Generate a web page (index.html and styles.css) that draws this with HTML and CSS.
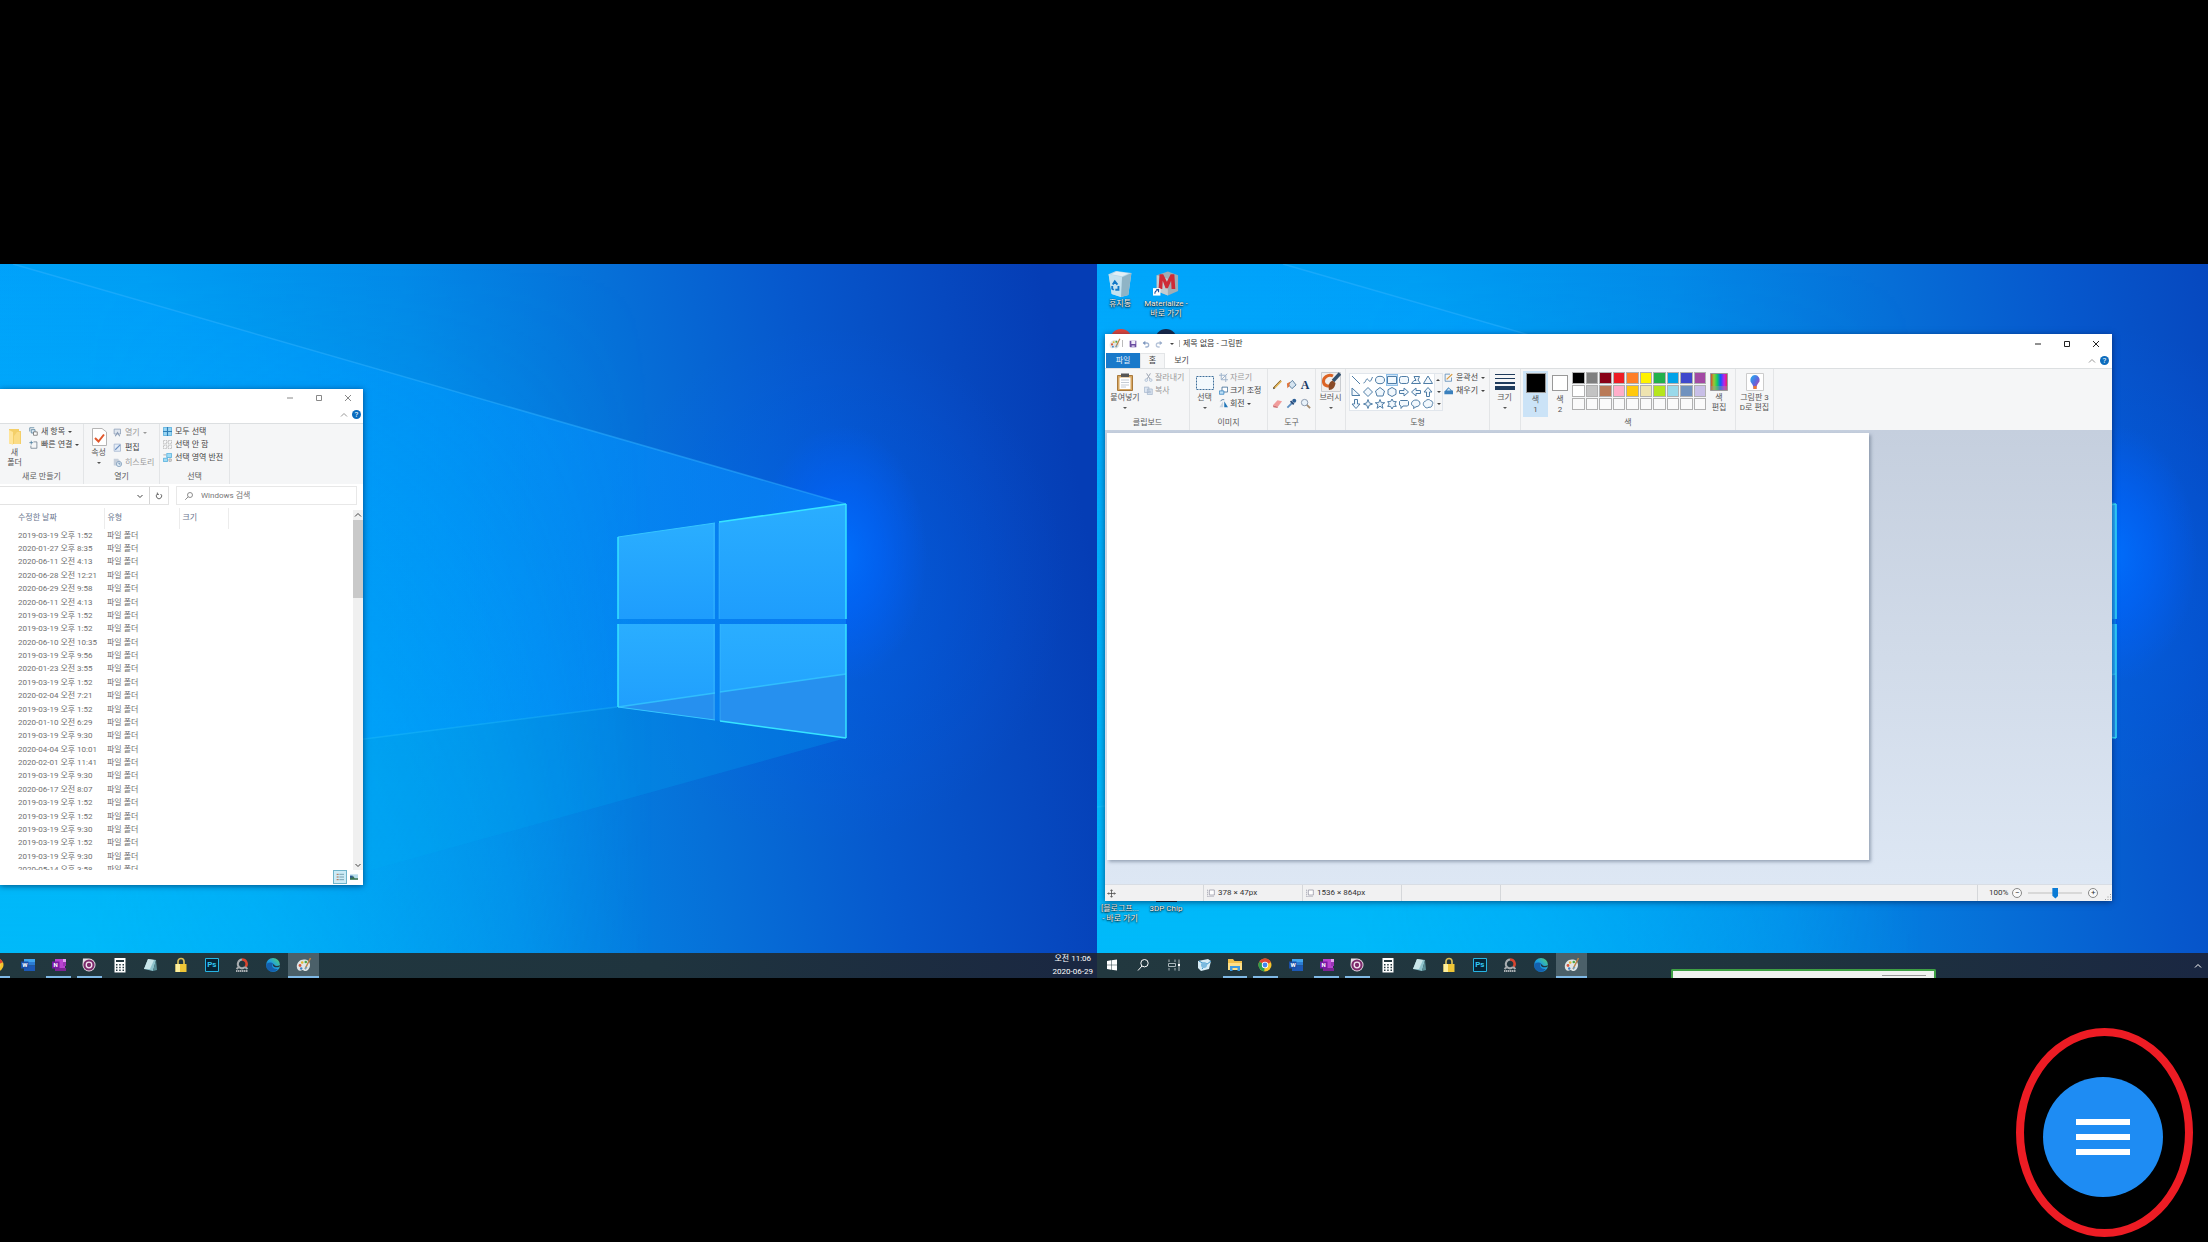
FILE: index.html
```html
<!DOCTYPE html>
<html lang="ko">
<head>
  <meta charset="UTF-8">
  <meta name="viewport" content="width=device-width, initial-scale=1.0">
  <title>원격 데스크톱</title>
  <link rel="stylesheet" href="styles.css">
</head>
<body>
  <!-- Icon sprite -->
  <svg class="sprite" aria-hidden="true">
    <defs>
      <linearGradient id="sky" x1="0" y1="0.55" x2="1" y2="0.45">
        <stop offset="0" stop-color="#00a8fb"/>
        <stop offset="0.3" stop-color="#009ef4"/>
        <stop offset="0.5" stop-color="#038ae8"/>
        <stop offset="0.66" stop-color="#0670d8"/>
        <stop offset="0.8" stop-color="#0658cd"/>
        <stop offset="0.92" stop-color="#0648bf"/>
        <stop offset="1" stop-color="#053db5"/>
      </linearGradient>
      <linearGradient id="floor" x1="0" y1="0" x2="0" y2="1">
        <stop offset="0" stop-color="#00c0fa" stop-opacity="0"/>
        <stop offset="1" stop-color="#00c0fa" stop-opacity="0.8"/>
      </linearGradient>
      <linearGradient id="floorFade" x1="0" y1="0" x2="1" y2="0">
        <stop offset="0.2" stop-color="#fff"/>
        <stop offset="0.65" stop-color="#000"/>
      </linearGradient>
      <mask id="floorMask"><rect width="1270" height="714" fill="url(#floorFade)"/></mask>
      <linearGradient id="beam" x1="0" y1="0" x2="1" y2="0">
        <stop offset="0" stop-color="#00a8ff" stop-opacity="0.4"/>
        <stop offset="0.6" stop-color="#0096ff" stop-opacity="0.6"/>
        <stop offset="1" stop-color="#0a86f8" stop-opacity="0.7"/>
      </linearGradient>
      <radialGradient id="glow">
        <stop offset="0" stop-color="#0070ff"/>
        <stop offset="0.45" stop-color="#0066ff" stop-opacity="0.65"/>
        <stop offset="1" stop-color="#0060ff" stop-opacity="0"/>
      </radialGradient>
      <linearGradient id="pane" x1="0" y1="0" x2="0" y2="1">
        <stop offset="0" stop-color="#2aaeff"/>
        <stop offset="1" stop-color="#1e9dfd"/>
      </linearGradient>
      <linearGradient id="rainbow">
        <stop offset="0" stop-color="#d33"/>
        <stop offset="0.2" stop-color="#9c3"/>
        <stop offset="0.4" stop-color="#1c6"/>
        <stop offset="0.6" stop-color="#15f"/>
        <stop offset="0.8" stop-color="#b2e"/>
        <stop offset="1" stop-color="#e24"/>
      </linearGradient>
      <linearGradient id="drop" x1="0" y1="0" x2="1" y2="1">
        <stop offset="0" stop-color="#1bb4f0"/>
        <stop offset="0.5" stop-color="#5a6be0"/>
        <stop offset="1" stop-color="#e0398b"/>
      </linearGradient>
      <linearGradient id="edge" x1="0" y1="1" x2="1" y2="0">
        <stop offset="0" stop-color="#0c59a4"/>
        <stop offset="0.5" stop-color="#1b9de2"/>
        <stop offset="1" stop-color="#5ad66b"/>
      </linearGradient>
    </defs>

    <symbol id="wallpaper" viewBox="0 0 1270 714">
      <rect width="1270" height="714" fill="url(#sky)"/>
      <ellipse cx="1000" cy="320" rx="240" ry="260" fill="url(#glow)" opacity="0.3"/>
      <ellipse cx="1015" cy="290" rx="85" ry="130" fill="url(#glow)" opacity="0.9"/>
      <path d="M186 0L1019 240V474L790 443L0 543V0Z" fill="url(#beam)"/>
      <path d="M790 443L0 543V714H155L1019 474Z" fill="#00a0f0" opacity="0.28"/>
      <rect width="1270" height="714" y="0" fill="url(#floor)" mask="url(#floorMask)"/>
      <path d="M186 0L1019 240" stroke="#35b4ff" stroke-width="1.5" opacity="0.45"/>
      <path d="M0 543L790 443" stroke="#2cc8ff" stroke-width="1.5" opacity="0.3"/>
      <g fill="url(#pane)">
        <path d="M791 273L888 259V355H791Z"/>
        <path d="M892 258L1019 240V355H892Z"/>
        <path d="M791 360H888V456L791 443Z"/>
        <path d="M893 360H1019V474L893 457Z"/>
      </g>
      <path d="M791 443L888 429V456Z" fill="#2690ef"/>
      <path d="M893 428L1019 410V474L893 457Z" fill="#2690ef"/>
      <path d="M791 443L888 429M893 428L1019 410" stroke="#34c8ff" stroke-width="1.5" opacity="0.8"/>
      <path d="M791 273L888 259M888 456L791 443" fill="none" stroke="#35c6ff"/>
      <path d="M791 355V273M791 360V443M1019 240V355M1019 360V474M892 258L1019 240M893 457L1019 474" fill="none" stroke="#36e4ff" stroke-width="1.5"/>
      <path d="M887 355V260M887 360V455M892 355V259M893 360V457" stroke="#4bd0ff" fill="none" opacity="0.4"/>
    </symbol>

    <!-- window controls -->
    <symbol id="minimize" viewBox="0 0 8 8"><path d="M1 4H7" stroke="currentColor"/></symbol>
    <symbol id="maximize" viewBox="0 0 8 8"><path d="M1.5 1.5H6.5V6.5H1.5Z" stroke="currentColor" fill="none"/></symbol>
    <symbol id="close" viewBox="0 0 8 8"><path d="M1 1L7 7M7 1L1 7" stroke="currentColor"/></symbol>
    <symbol id="up" viewBox="0 0 8 8"><path d="M1 5.5L4 2.5L7 5.5" stroke="currentColor" fill="none"/></symbol>
    <symbol id="down" viewBox="0 0 8 8"><path d="M1.5 3L4 5.5L6.5 3" stroke="currentColor" fill="none"/></symbol>
    <symbol id="caret" viewBox="0 0 4 4"><path d="M0 1H4L2 3Z" fill="currentColor"/></symbol>
    <symbol id="search" viewBox="0 0 12 12"><path d="M1.5 10.5L5 7" stroke="currentColor" fill="none"/><circle cx="7.2" cy="4.8" r="3" stroke="currentColor" fill="none"/></symbol>
    <symbol id="refresh" viewBox="0 0 12 12"><path d="M3.5 3A4 4 0 1 0 8.5 3M3.5 0.8V3.5H6" stroke="currentColor" stroke-width="1.2" fill="none"/></symbol>

    <!-- explorer ribbon -->
    <symbol id="folder" viewBox="0 0 18 18"><path d="M3 1H13V3H15V16H4L3 15Z" fill="#f4cf69"/><path d="M3 2L7 4V17L3 15Z" fill="#ffe59b"/><path d="M11 4H14V16H8V8Z" fill="#fbdc85"/></symbol>
    <symbol id="check-page" viewBox="0 0 18 18"><path d="M2.5 0.5H12L16.5 4V17.5H2.5Z" fill="#fff" stroke="#b5b5b5"/><path d="M5 10L8.5 13.5L14 6.5" fill="none" stroke="#e0562b" stroke-width="2"/></symbol>
    <symbol id="new-item" viewBox="0 0 12 12"><path d="M1 1V6M1 1H7M3 3.5H8V8H3Z" fill="#dcebf5" stroke="#4b7a97"/><path d="M6 6.5H11V11H6Z" fill="#fff" stroke="#666"/></symbol>
    <symbol id="easy" viewBox="0 0 12 12"><path d="M3 1V6M0.5 3.5H5.5" stroke="#3d7396"/><path d="M6 2.5H10.5V11H2.5V7.5" fill="none" stroke="#678"/></symbol>
    <symbol id="open" viewBox="0 0 12 12"><path d="M1.5 1.5H10V8H1.5Z" fill="#dfe6ef" stroke="#8a9cb5"/><path d="M3 11L6 6L9 11" fill="none" stroke="#8a9cb5" stroke-width="1.5"/></symbol>
    <symbol id="edit" viewBox="0 0 12 12"><path d="M1.5 1.5H10V11H1.5Z" fill="#e5edf8" stroke="#9fb2cc"/><path d="M3 9L9.5 2.5" stroke="#6c8fc0" stroke-width="1.5"/></symbol>
    <symbol id="history" viewBox="0 0 12 12"><path d="M1 1H7L8 3H9V10H1Z" fill="#c6cfdb"/><circle cx="8" cy="8" r="3.5" fill="#dbe8f3" stroke="#7c99b8"/><path d="M8 6V8H10" stroke="#5b7ea3" fill="none"/></symbol>
    <symbol id="all" viewBox="0 0 12 12"><path d="M0.5 0.5H11.5V11.5H0.5Z" fill="#9ad6f3" stroke="#46a5d9"/><path d="M6 0V12M0 6H12" stroke="#2e7fb8" stroke-width="1.5"/></symbol>
    <symbol id="none" viewBox="0 0 12 12"><path d="M0.5 0.5H5V5H0.5ZM7 0.5H11.5V5H7ZM0.5 7H5V11.5H0.5ZM7 7H11.5V11.5H7Z" fill="none" stroke="#a5a5a5" stroke-dasharray="2 1"/></symbol>
    <symbol id="invert" viewBox="0 0 12 12"><path d="M5 0.5H11.5V6H5ZM0.5 7H6V11.5H0.5Z" fill="#9fdcf5" stroke="#4aa9d9"/><path d="M0.5 2.5H4M8 8H11V11H8Z" fill="none" stroke="#999"/></symbol>
    <symbol id="details" viewBox="0 0 12 12"><path d="M1 2H4M1 6H4M1 10H4" stroke="#b06d4c" stroke-width="1.5"/><path d="M5 2H12M5 6H12M5 10H12" stroke="#51808f"/></symbol>
    <symbol id="thumbs" viewBox="0 0 12 12"><path d="M0 2H12V10H0Z" fill="#b7dcec"/><path d="M0 6L5 5L7 8H12V10H0Z" fill="#3b7350"/><path d="M0 4H4V7H0Z" fill="#2e5a94"/></symbol>

    <!-- paint title and ribbon -->
    <symbol id="palette" viewBox="0 0 16 16"><path d="M8 2.5C3.5 2.5 0.8 6 0.8 9.5C0.8 12.5 3 14.5 5 13.5C6.5 12.7 7 12.8 8 13.8C10 15 14 12.5 14 8C14 4.5 11.5 2.5 8 2.5Z" fill="#dfe5e6"/><circle cx="4" cy="8.5" r="1.4" fill="#d8583c"/><circle cx="6.2" cy="5.5" r="1.3" fill="#e3b62f"/><circle cx="9.8" cy="5" r="1.3" fill="#4ba64a"/><circle cx="5.2" cy="11.5" r="1.2" fill="#3c7fc4"/><path d="M9 12L14.5 1" stroke="#bd8548" stroke-width="1.6"/><path d="M9 13L9.5 9.5L11.5 10.5Z" fill="#6aa0c8"/></symbol>
    <symbol id="save" viewBox="0 0 12 12"><path d="M1 1H11V11H2L1 10Z" fill="#6b4ca0"/><path d="M3.5 1H9.5V6H3.5Z" fill="#f0ecf8"/><path d="M4 8H8.5V11H4Z" fill="#c9bde0"/></symbol>
    <symbol id="undo" viewBox="0 0 12 12"><path d="M2 4.5H7A3 3 0 0 1 7 10.5H5" fill="none" stroke="#a0b3d0" stroke-width="2"/><path d="M5 1V8L1 4.5Z" fill="#7d96be"/></symbol>
    <symbol id="redo" viewBox="0 0 12 12"><path d="M10 4.5H5A3 3 0 0 0 5 10.5H7" fill="none" stroke="#b7c5da" stroke-width="2"/><path d="M7 1V8L11 4.5Z" fill="#9caecb"/></symbol>
    <symbol id="paste" viewBox="0 0 18 18"><path d="M1.5 2.5H16.5V17.5H1.5Z" fill="#d6a661" stroke="#a9793b"/><path d="M3.5 4.5H14.5V16H3.5Z" fill="#fff"/><path d="M5 0.5H13V4H5Z" fill="#555"/><path d="M5 7H13M5 9.5H13M5 12H13M5 14H10" stroke="#c5ccd4"/></symbol>
    <symbol id="cut" viewBox="0 0 12 12"><path d="M3.5 0.5L8 8M8.5 0.5L4 8" stroke="#9aa4b2" stroke-width="1.3"/><circle cx="3" cy="9.5" r="1.7" fill="none" stroke="#9fb4cf"/><circle cx="9" cy="9.5" r="1.7" fill="none" stroke="#9fb4cf"/></symbol>
    <symbol id="copy" viewBox="0 0 12 12"><path d="M0.5 1.5H6.5V8.5H0.5ZM4.5 4H11V11.5H4.5Z" fill="#dde6f1" stroke="#a3b4cb"/><path d="M6 7H9.5M6 9H9.5" stroke="#a3b4cb"/></symbol>
    <symbol id="select" viewBox="0 0 18 18"><path d="M0.5 3.5H17.5V16.5H0.5Z" fill="#f3f9fd" stroke="#3f6f9b" stroke-dasharray="2 1"/></symbol>
    <symbol id="crop" viewBox="0 0 12 12"><path d="M3 0V9H12M0 3H9V12M3 9L11 1" fill="none" stroke="#9fb3cc" stroke-width="1.3"/></symbol>
    <symbol id="resize" viewBox="0 0 12 12"><path d="M4 1.5H11.5V8H4Z" fill="#fff" stroke="#2c5f8e"/><path d="M0.5 6.5H6.5V11H0.5Z" fill="#bfe0f6" stroke="#2c7fc0"/></symbol>
    <symbol id="rotate" viewBox="0 0 12 12"><path d="M5.5 3V11H0.5Z" fill="#c9d4df"/><path d="M7 3L12 11H7Z" fill="#1f75b8"/><path d="M2 3C3 1 5 0.5 7 1" stroke="#2c5f8e" fill="none"/></symbol>
    <symbol id="pencil" viewBox="0 0 12 12"><path d="M2 10L10 2" stroke="#dfb254" stroke-width="2.4"/><path d="M1 11.2L2 8.8L3.3 10Z" fill="#333"/><path d="M1.5 9.5L9.5 1.3" stroke="#6d5430" stroke-width="0.8"/></symbol>
    <symbol id="fill" viewBox="0 0 12 12"><path d="M2.5 6L7 1.5L11 6.5L6.5 10.5Z" fill="#d5e4f0" stroke="#54799b"/><path d="M1 5L4.5 3L3.5 8L1.5 10Z" fill="#e0743c"/></symbol>
    <symbol id="eraser" viewBox="0 0 12 12"><path d="M1 8L6 2.5L11 3.5L6.5 9.5Z" fill="#f19c9b"/><path d="M1 8L6.5 9.5L6 11L1.5 10Z" fill="#cf6d70"/></symbol>
    <symbol id="picker" viewBox="0 0 12 12"><path d="M1.5 10.5L7 5" stroke="#5e8fc0" stroke-width="2"/><path d="M5 3.5L8.5 7" stroke="#2c4e7c" stroke-width="2"/><circle cx="9" cy="3" r="2.2" fill="#2c5f96"/></symbol>
    <symbol id="zoom" viewBox="0 0 12 12"><path d="M7 7L11 11" stroke="#a58c70" stroke-width="2"/><circle cx="5" cy="5" r="3.5" fill="#e8f2fa" stroke="#8393a8"/></symbol>
    <symbol id="brush" viewBox="0 0 20 20"><path d="M0.5 0.5H19.5V19.5H0.5Z" fill="#f1eeec" stroke="#c9ccd0"/><path d="M12 4C7 1.500 2 6 2.500 10C3 14 8 15 10 13" fill="none" stroke="#dc6425" stroke-width="3"/><path d="M19 1.500L12 9" stroke="#31506e" stroke-width="3.500"/><path d="M8 18C7 14 8 10 11.500 8.500L14.500 11C14 15 12 18 8 18Z" fill="#8a4a26"/></symbol>
    <symbol id="outline" viewBox="0 0 12 12"><path d="M8 1.5H1.5V11H10V6" fill="none" stroke="#4d81b1"/><path d="M3.5 8.5L11 1.5" stroke="#d89a3e" stroke-width="1.8"/></symbol>
    <symbol id="bucket" viewBox="0 0 12 12"><path d="M2 6L6 1.5L10.5 6H12V11H0.5V7Z" fill="#3a80bd"/><path d="M3.5 6L6.5 3L9 6Z" fill="#d5e9f7"/></symbol>
    <symbol id="weights" viewBox="0 0 20 18"><path d="M0 1.5H20M0 5.5H20" stroke="#1f3b5c"/><path d="M0 10H20" stroke="#1f3b5c" stroke-width="2"/><path d="M0 15H20" stroke="#1f3b5c" stroke-width="4"/></symbol>
    <symbol id="spectrum" viewBox="0 0 18 18"><path d="M0.5 0.5H17.5V17.5H0.5Z" fill="url(#rainbow)" stroke="#999"/><path d="M1 13H17V17H1Z" fill="#999" opacity="0.45"/></symbol>
    <symbol id="paint3d" viewBox="0 0 18 18"><path d="M0.5 0.5H17.5V17.5H0.5Z" fill="#fff" stroke="#ccc"/><path d="M9 2A5 5 0 0 1 13.5 8.5C12 11 10.5 11.5 10.5 16H7.5C7.5 11.5 5.5 11 4.5 8.5A5 5 0 0 1 9 2Z" fill="url(#drop)"/><path d="M7.5 13H10.5V16H7.5Z" fill="#ef7a2f"/></symbol>
    <symbol id="move" viewBox="0 0 12 12"><path d="M6 1V11M1 6H11M4.5 2.5L6 1L7.5 2.5M4.5 9.5L6 11L7.5 9.5M2.5 4.5L1 6L2.5 7.5M9.5 4.5L11 6L9.5 7.5" fill="none" stroke="#444"/></symbol>
    <symbol id="dims" viewBox="0 0 12 12"><path d="M3.5 1.5H11V9H3.5Z" fill="#fff" stroke="#889"/><path d="M0.5 1V11.5H11" fill="none" stroke="#889" stroke-dasharray="2 1"/></symbol>
    <symbol id="grip" viewBox="0 0 8 8"><path d="M6 1H7V2H6ZM6 3.5H7V4.5H6ZM3.5 3.5H4.5V4.5H3.5ZM6 6H7V7H6ZM3.5 6H4.5V7H3.5ZM1 6H2V7H1Z" fill="#999"/></symbol>

    <!-- shape gallery -->
    <symbol id="s-line" viewBox="0 0 12 12"><path d="M2 2L10 10"/></symbol>
    <symbol id="s-curve" viewBox="0 0 12 12"><path d="M1.5 9C4 9 4 3 6 5.5S8 9 10.5 3" fill="none"/></symbol>
    <symbol id="s-oval" viewBox="0 0 12 12"><ellipse cx="6" cy="6" rx="4.5" ry="3.7"/></symbol>
    <symbol id="s-rect" viewBox="0 0 12 12"><path d="M1.5 2.5H10.5V9.5H1.5Z"/></symbol>
    <symbol id="s-round" viewBox="0 0 12 12"><rect x="1.5" y="2.5" width="9" height="7" rx="2"/></symbol>
    <symbol id="s-poly" viewBox="0 0 12 12"><path d="M4 2.5H9.5L8 6L10.5 9.5H1.5L4 6.5H6Z"/></symbol>
    <symbol id="s-tri" viewBox="0 0 12 12"><path d="M6 2L10.5 9.5H1.5Z"/></symbol>
    <symbol id="s-rtri" viewBox="0 0 12 12"><path d="M2 2V9.5H10Z"/></symbol>
    <symbol id="s-dia" viewBox="0 0 12 12"><path d="M6 1.5L10.5 6L6 10.5L1.5 6Z"/></symbol>
    <symbol id="s-pent" viewBox="0 0 12 12"><path d="M6 1.5L10.5 5L9 10H3L1.5 5Z"/></symbol>
    <symbol id="s-hex" viewBox="0 0 12 12"><path d="M6 1.5L10 3.7V8.3L6 10.5L2 8.3V3.7Z"/></symbol>
    <symbol id="s-arrow" viewBox="0 0 12 12"><path d="M1.5 4.5H6V2L10.5 6L6 10V7.5H1.5Z"/></symbol>
    <symbol id="s-star4" viewBox="0 0 12 12"><path d="M6 1.5L7.2 4.8L10.5 6L7.2 7.2L6 10.5L4.8 7.2L1.5 6L4.8 4.8Z"/></symbol>
    <symbol id="s-star5" viewBox="0 0 12 12"><path d="M6 1.5L7.3 4.7H10.7L8 6.8L9 10.3L6 8.2L3 10.3L4 6.8L1.3 4.7H4.7Z"/></symbol>
    <symbol id="s-star6" viewBox="0 0 12 12"><path d="M6 1L7.4 3.6H10.3L8.8 6L10.3 8.4H7.4L6 11L4.6 8.4H1.7L3.2 6L1.7 3.6H4.6Z"/></symbol>
    <symbol id="s-call" viewBox="0 0 12 12"><path d="M2.5 2.5H9.5L10.5 3.5V7L9.5 8H5L3 10.5V8L1.5 7V3.5Z"/></symbol>
    <symbol id="s-ocall" viewBox="0 0 12 12"><path d="M4 8.5C-0.5 7 1.5 2 6 2S12 8 6 8.8L3.5 10.5Z"/></symbol>
    <symbol id="s-cloud" viewBox="0 0 12 12"><path d="M3.5 3C5 1 7.5 1.2 8.5 2.5C11 3 11.2 5.5 10.3 6.5C10.5 8.5 8.5 9.8 7 9.2C5 10.5 3 9.8 2.8 8.5C0.5 7.5 1 3.5 3.5 3Z"/></symbol>

    <!-- desktop and taskbar -->
    <symbol id="bin" viewBox="0 0 24 26"><path d="M1 4L8 1L23 3L20 24L13 26L4 23Z" fill="#b9d9ea"/><path d="M1 4L14 7L13 26L4 23Z" fill="#c4e2f0"/><path d="M14 7L23 3L20 24L13 26Z" fill="#8fb4c6"/><path d="M4 4L9 1.5L20 3.3L14 6Z" fill="#e2eff5"/><path d="M5 14L7 11L9.500 14M10.500 15.500L10.500 19L7.500 19M4.500 15.500L4.500 18L6 19" stroke="#1178c8" stroke-width="1.800" fill="none"/></symbol>
    <symbol id="materialize" viewBox="0 0 28 28"><path d="M4 5L16 1L27 5V22L16 27L4 22Z" fill="#9fadb5"/><path d="M4 5L16 9V27L4 22Z" fill="#c3ccd1"/><path d="M6 20L7 4H11L15 12L19 4H23L24 20H20L19.5 11L16 19H13.5L10.5 11L10 20Z" fill="#cf2b36"/><path d="M0 19H8V27H0Z" fill="#fff"/><path d="M2 25C2 22 3 21.5 5 21.5M3.5 20.5H6V23.5" stroke="#1b4f9c" fill="none" stroke-width="1.2"/></symbol>
    <symbol id="t-start" viewBox="0 0 16 16"><path d="M3 4L7 3.3V7.7H3ZM7.5 3.2L13 2.5V7.7H7.5ZM3 8.2H7V12.7L3 12ZM7.5 8.2H13V13.5L7.5 12.8Z" fill="#fff"/></symbol>
    <symbol id="t-search" viewBox="0 0 16 16"><path d="M3 13.5L7 9" stroke="#fff" fill="none"/><circle cx="9.5" cy="6.2" r="3.7" stroke="#fff" fill="none"/></symbol>
    <symbol id="t-view" viewBox="0 0 16 16"><path d="M3 2.5V5M3 11V13.5M9 2.5V5M9 11V13.5M2.5 6.5V9.5H9.5V6.5ZM13 2.5V14" stroke="#aab6bb" fill="none"/><path d="M12 7H14V9H12Z" fill="#fff"/></symbol>
    <symbol id="t-mail" viewBox="0 0 16 16"><path d="M2 4L12 2L15 4L13 12L5 14L2 11Z" fill="#d7ecf5"/><path d="M3 4L10 8L15 4M6 12L11 6" stroke="#3a93c8" fill="none"/><circle cx="8" cy="8" r="3" fill="#7bb9de"/></symbol>
    <symbol id="t-explorer" viewBox="0 0 16 16"><path d="M1 2H6L7.5 4H15V13H1Z" fill="#f2c14b"/><path d="M1 6H15V13H1Z" fill="#ffdf86"/><path d="M3 14V9H13V14H10.5V11H5.5V14Z" fill="#3f9be0"/></symbol>
    <symbol id="t-chrome" viewBox="0 0 16 16"><circle cx="8" cy="8" r="6.5" fill="#f7c52c"/><path d="M8 8L2.4 4.7A6.5 6.5 0 0 1 13.9 5.2Z" fill="#df4632"/><path d="M8 8L2.4 4.7A6.5 6.5 0 0 0 7.2 14.45Z" fill="#2d9d4f"/><circle cx="8" cy="8" r="3.2" fill="#fff"/><circle cx="8" cy="8" r="2.4" fill="#4285f0"/></symbol>
    <symbol id="t-word" viewBox="0 0 16 16"><path d="M4 2H15V5H4Z" fill="#41a5ee"/><path d="M4 5H15V8.5H4Z" fill="#2b7cd3"/><path d="M4 8.5H15V14H4Z" fill="#1c58b5"/><path d="M1 4.5H8.5V11.5H1Z" fill="#1a4fa8"/></symbol>
    <symbol id="t-onenote" viewBox="0 0 16 16"><path d="M4 2H14V14H4Z" fill="#b843d0"/><path d="M12 2H15V5H12Z" fill="#e2a0f0"/><path d="M12 5H15V9H12Z" fill="#9b35b5"/><path d="M4 11H15V14H4Z" fill="#7d2394"/><path d="M1 4.5H8.5V11.5H1Z" fill="#7719a5"/></symbol>
    <symbol id="t-disc" viewBox="0 0 16 16"><path d="M2 1.500H8A6.500 6.500 0 1 1 1.500 8Z" fill="#e6dfe6"/><circle cx="8" cy="8" r="5.600" fill="#7d2b6c"/><circle cx="8" cy="8" r="2.800" fill="none" stroke="#f2e4f0" stroke-width="1.300"/></symbol>
    <symbol id="t-calc" viewBox="0 0 16 16"><path d="M2.5 1H13.5V15.5H2.5Z" fill="#fff"/><path d="M4 3H12V5H4ZM4 7H5.5V8.5H4ZM7.2 7H8.7V8.5H7.2ZM10.5 7H12V8.5H10.5ZM4 9.8H5.5V11.3H4ZM7.2 9.8H8.7V11.3H7.2ZM10.5 9.8H12V11.3H10.5ZM4 12.5H5.5V14H4ZM7.2 12.5H8.7V14H7.2ZM10.5 12.5H12V14H10.5Z" fill="#24383f"/></symbol>
    <symbol id="t-note" viewBox="0 0 16 16"><path d="M6 2L14 3L11 14L2 12Z" fill="#8fc3cc"/><path d="M6 2L12 3L8 12L2 12Z" fill="#c9e6ea"/><path d="M14 3L15 13L11 14Z" fill="#5b9099"/></symbol>
    <symbol id="t-lock" viewBox="0 0 16 16"><path d="M5 8V4.5A3 3 0 0 1 11 4.5V8" fill="none" stroke="#d8bd55" stroke-width="1.7"/><path d="M2.5 7H13.5V15H2.5Z" fill="#efc636"/><path d="M2.5 7H7V15H2.5Z" fill="#fff09d"/></symbol>
    <symbol id="t-ps" viewBox="0 0 16 16"><path d="M1.5 1.5H14.5V14.5H1.5Z" fill="#062436" stroke="#27b5e4"/></symbol>
    <symbol id="t-tool" viewBox="0 0 16 16"><path d="M8 2.500A4.500 4.500 0 0 1 11.500 10" fill="none" stroke="#d9452f" stroke-width="2.500"/><path d="M8 2.500A4.500 4.500 0 0 0 5 10L2.500 12M11 10L13.500 12M5 10A4.500 4.500 0 0 0 11 10" fill="none" stroke="#a8adb0" stroke-width="2"/><path d="M2 14H14" stroke="#a8adb0" stroke-width="2" stroke-dasharray="1.500 0.500"/></symbol>
    <symbol id="t-edge" viewBox="0 0 16 16"><circle cx="8" cy="8" r="7" fill="url(#edge)"/><path d="M1.2 8C2 5.5 6 4.5 8.5 7C6 8 6.5 12.5 13 12C9 16.5 1.5 15 1.2 8Z" fill="#1560ad"/><path d="M8.5 7C7 8.500 8.500 11 14 10L15.500 8C12 9.500 10 9 9.500 8Z" fill="#22373f"/></symbol>
  </svg>

  <main class="screens">
    <!-- Left screen: explorer -->
    <section class="screen">
      <div class="desktop">
        <svg class="wallpaper" viewBox="0 0 1270 714" preserveAspectRatio="xMaxYMin slice"><use href="#wallpaper" width="1270" height="714"/></svg>

        <div class="window explorer">
          <div class="title-bar">
            <div class="window-buttons">
              <button aria-label="최소화"><svg><use href="#minimize"/></svg></button>
              <button aria-label="최대화"><svg><use href="#maximize"/></svg></button>
              <button aria-label="닫기"><svg><use href="#close"/></svg></button>
            </div>
          </div>
          <div class="tab-bar">
            <button class="collapse" aria-label="리본 최소화"><svg><use href="#up"/></svg></button>
            <button class="help">?</button>
          </div>
          <div class="ribbon">
            <div class="group new-group">
              <div class="group-body">
                <button class="big"><svg><use href="#folder"/></svg><span>새<br>폴더</span></button>
                <div class="stack">
                  <button><svg><use href="#new-item"/></svg>새 항목<svg class="caret"><use href="#caret"/></svg></button>
                  <button><svg><use href="#easy"/></svg>빠른 연결<svg class="caret"><use href="#caret"/></svg></button>
                </div>
              </div>
              <div class="group-label">새로 만들기</div>
            </div>
            <div class="group open-group">
              <div class="group-body">
                <button class="big"><svg><use href="#check-page"/></svg><span>속성</span><svg class="caret"><use href="#caret"/></svg></button>
                <div class="stack loose">
                  <button class="dim"><svg><use href="#open"/></svg>열기<svg class="caret"><use href="#caret"/></svg></button>
                  <button><svg><use href="#edit"/></svg>편집</button>
                  <button class="dim"><svg><use href="#history"/></svg>히스토리</button>
                </div>
              </div>
              <div class="group-label">열기</div>
            </div>
            <div class="group pick-group">
              <div class="group-body">
                <div class="stack">
                  <button><svg><use href="#all"/></svg>모두 선택</button>
                  <button><svg><use href="#none"/></svg>선택 안 함</button>
                  <button><svg><use href="#invert"/></svg>선택 영역 반전</button>
                </div>
              </div>
              <div class="group-label">선택</div>
            </div>
          </div>
          <div class="address-row">
            <div class="address">
              <input type="text" aria-label="주소">
              <button aria-label="이전 위치"><svg><use href="#down"/></svg></button>
              <button class="refresh" aria-label="새로 고침"><svg><use href="#refresh"/></svg></button>
            </div>
            <label class="search"><svg><use href="#search"/></svg><input type="text" placeholder="Windows 검색" aria-label="Windows 검색"></label>
          </div>
          <div class="file-area">
            <div class="file-list">
              <table>
                <thead>
                  <tr><th class="date">수정한 날짜</th><th class="type">유형</th><th class="size">크기</th><th></th></tr>
                </thead>
                <tbody>
                  <tr><td>2019-03-19 오후 1:52</td><td>파일 폴더</td><td></td><td></td></tr>
                  <tr><td>2020-01-27 오후 8:35</td><td>파일 폴더</td><td></td><td></td></tr>
                  <tr><td>2020-06-11 오전 4:13</td><td>파일 폴더</td><td></td><td></td></tr>
                  <tr><td>2020-06-28 오전 12:21</td><td>파일 폴더</td><td></td><td></td></tr>
                  <tr><td>2020-06-29 오전 9:58</td><td>파일 폴더</td><td></td><td></td></tr>
                  <tr><td>2020-06-11 오전 4:13</td><td>파일 폴더</td><td></td><td></td></tr>
                  <tr><td>2019-03-19 오후 1:52</td><td>파일 폴더</td><td></td><td></td></tr>
                  <tr><td>2019-03-19 오후 1:52</td><td>파일 폴더</td><td></td><td></td></tr>
                  <tr><td>2020-06-10 오전 10:35</td><td>파일 폴더</td><td></td><td></td></tr>
                  <tr><td>2019-03-19 오후 9:56</td><td>파일 폴더</td><td></td><td></td></tr>
                  <tr><td>2020-01-23 오전 3:55</td><td>파일 폴더</td><td></td><td></td></tr>
                  <tr><td>2019-03-19 오후 1:52</td><td>파일 폴더</td><td></td><td></td></tr>
                  <tr><td>2020-02-04 오전 7:21</td><td>파일 폴더</td><td></td><td></td></tr>
                  <tr><td>2019-03-19 오후 1:52</td><td>파일 폴더</td><td></td><td></td></tr>
                  <tr><td>2020-01-10 오전 6:29</td><td>파일 폴더</td><td></td><td></td></tr>
                  <tr><td>2019-03-19 오후 9:30</td><td>파일 폴더</td><td></td><td></td></tr>
                  <tr><td>2020-04-04 오후 10:01</td><td>파일 폴더</td><td></td><td></td></tr>
                  <tr><td>2020-02-01 오후 11:41</td><td>파일 폴더</td><td></td><td></td></tr>
                  <tr><td>2019-03-19 오후 9:30</td><td>파일 폴더</td><td></td><td></td></tr>
                  <tr><td>2020-06-17 오전 8:07</td><td>파일 폴더</td><td></td><td></td></tr>
                  <tr><td>2019-03-19 오후 1:52</td><td>파일 폴더</td><td></td><td></td></tr>
                  <tr><td>2019-03-19 오후 1:52</td><td>파일 폴더</td><td></td><td></td></tr>
                  <tr><td>2019-03-19 오후 9:30</td><td>파일 폴더</td><td></td><td></td></tr>
                  <tr><td>2019-03-19 오후 1:52</td><td>파일 폴더</td><td></td><td></td></tr>
                  <tr><td>2019-03-19 오후 9:30</td><td>파일 폴더</td><td></td><td></td></tr>
                  <tr><td>2020-05-14 오후 3:58</td><td>파일 폴더</td><td></td><td></td></tr>
                </tbody>
              </table>
            </div>
            <div class="scrollbar">
              <button aria-label="위로"><svg><use href="#up"/></svg></button>
              <div class="thumb"></div>
              <button class="last" aria-label="아래로"><svg><use href="#down"/></svg></button>
            </div>
          </div>
          <div class="view-bar">
            <button class="active" aria-label="자세히"><svg><use href="#details"/></svg></button>
            <button aria-label="큰 아이콘"><svg><use href="#thumbs"/></svg></button>
          </div>
        </div>
      </div>

      <div class="taskbar">
        <nav class="apps apps-cut">
          <button class="open" aria-label="Chrome"><svg><use href="#t-chrome"/></svg></button>
          <button><svg><use href="#t-word"/></svg><b class="office">W</b></button>
          <button class="open"><svg><use href="#t-onenote"/></svg><b class="office">N</b></button>
          <button class="open" aria-label="녹화"><svg><use href="#t-disc"/></svg></button>
          <button aria-label="계산기"><svg><use href="#t-calc"/></svg></button>
          <button aria-label="메모"><svg><use href="#t-note"/></svg></button>
          <button aria-label="잠금"><svg><use href="#t-lock"/></svg></button>
          <button><svg><use href="#t-ps"/></svg><b class="adobe">Ps</b></button>
          <button aria-label="도구"><svg><use href="#t-tool"/></svg></button>
          <button aria-label="Edge"><svg><use href="#t-edge"/></svg></button>
          <button class="current" aria-label="그림판"><svg><use href="#palette"/></svg></button>
        </nav>
        <div class="clock"><span>오전 11:06</span><span>2020-06-29</span></div>
      </div>
    </section>

    <!-- Right screen: paint -->
    <section class="screen">
      <div class="desktop">
        <svg class="wallpaper" viewBox="0 0 1270 714" preserveAspectRatio="xMinYMin slice"><use href="#wallpaper" width="1270" height="714"/></svg>

        <div class="shortcut bin"><svg><use href="#bin"/></svg><span>휴지통</span></div>
        <div class="shortcut mat"><svg><use href="#materialize"/></svg><span>Materialize -<br>바로 가기</span></div>
        <div class="peek red"></div>
        <div class="peek navy"></div>
        <div class="shortcut blog"><span>[블로그프...<br>- 바로 가기</span></div>
        <div class="shortcut chip"><span>3DP Chip</span></div>

        <div class="window paint">
          <div class="title-bar">
            <svg class="app-icon"><use href="#palette"/></svg>
            <i class="bar"></i>
            <button aria-label="저장"><svg><use href="#save"/></svg></button>
            <button aria-label="실행 취소"><svg><use href="#undo"/></svg></button>
            <button aria-label="다시 실행"><svg><use href="#redo"/></svg></button>
            <button aria-label="빠른 실행"><svg class="caret"><use href="#caret"/></svg></button>
            <i class="bar"></i>
            <span class="title">제목 없음 - 그림판</span>
            <div class="window-buttons">
              <button aria-label="최소화"><svg><use href="#minimize"/></svg></button>
              <button aria-label="최대화"><svg><use href="#maximize"/></svg></button>
              <button aria-label="닫기"><svg><use href="#close"/></svg></button>
            </div>
          </div>
          <div class="tab-bar">
            <button class="tab file">파일</button>
            <button class="tab home">홈</button>
            <button class="tab view">보기</button>
            <button class="collapse" aria-label="리본 최소화"><svg><use href="#up"/></svg></button>
            <button class="help">?</button>
          </div>
          <div class="ribbon">
            <div class="group clip-group">
              <div class="group-body">
                <button class="big"><svg><use href="#paste"/></svg><span>붙여넣기</span><svg class="caret"><use href="#caret"/></svg></button>
                <div class="stack">
                  <button class="dim"><svg><use href="#cut"/></svg>잘라내기</button>
                  <button class="dim"><svg><use href="#copy"/></svg>복사</button>
                </div>
              </div>
              <div class="group-label">클립보드</div>
            </div>
            <div class="group image-group">
              <div class="group-body">
                <button class="big"><svg><use href="#select"/></svg><span>선택</span><svg class="caret"><use href="#caret"/></svg></button>
                <div class="stack">
                  <button class="dim"><svg><use href="#crop"/></svg>자르기</button>
                  <button><svg><use href="#resize"/></svg>크기 조정</button>
                  <button><svg><use href="#rotate"/></svg>회전<svg class="caret"><use href="#caret"/></svg></button>
                </div>
              </div>
              <div class="group-label">이미지</div>
            </div>
            <div class="group tool-group">
              <div class="group-body">
                <button aria-label="연필"><svg><use href="#pencil"/></svg></button>
                <button aria-label="채우기"><svg><use href="#fill"/></svg></button>
                <button class="letter">A</button>
                <button aria-label="지우개"><svg><use href="#eraser"/></svg></button>
                <button aria-label="색 선택"><svg><use href="#picker"/></svg></button>
                <button aria-label="돋보기"><svg><use href="#zoom"/></svg></button>
              </div>
              <div class="group-label">도구</div>
            </div>
            <div class="group brush-group">
              <div class="group-body">
                <button class="big"><svg><use href="#brush"/></svg><span>브러시</span><svg class="caret"><use href="#caret"/></svg></button>
              </div>
            </div>
            <div class="group shape-group">
              <div class="group-body">
                <div class="gallery">
                  <button aria-label="선"><svg><use href="#s-line"/></svg></button>
                  <button aria-label="곡선"><svg><use href="#s-curve"/></svg></button>
                  <button aria-label="타원"><svg><use href="#s-oval"/></svg></button>
                  <button class="chosen" aria-label="사각형"><svg><use href="#s-rect"/></svg></button>
                  <button aria-label="둥근 사각형"><svg><use href="#s-round"/></svg></button>
                  <button aria-label="다각형"><svg><use href="#s-poly"/></svg></button>
                  <button aria-label="삼각형"><svg><use href="#s-tri"/></svg></button>
                  <button aria-label="직각 삼각형"><svg><use href="#s-rtri"/></svg></button>
                  <button aria-label="다이아몬드"><svg><use href="#s-dia"/></svg></button>
                  <button aria-label="오각형"><svg><use href="#s-pent"/></svg></button>
                  <button aria-label="육각형"><svg><use href="#s-hex"/></svg></button>
                  <button aria-label="오른쪽 화살표"><svg><use href="#s-arrow"/></svg></button>
                  <button class="turn-left" aria-label="왼쪽 화살표"><svg><use href="#s-arrow"/></svg></button>
                  <button class="turn-up" aria-label="위쪽 화살표"><svg><use href="#s-arrow"/></svg></button>
                  <button class="turn-down" aria-label="아래쪽 화살표"><svg><use href="#s-arrow"/></svg></button>
                  <button aria-label="별 4"><svg><use href="#s-star4"/></svg></button>
                  <button aria-label="별 5"><svg><use href="#s-star5"/></svg></button>
                  <button aria-label="별 6"><svg><use href="#s-star6"/></svg></button>
                  <button aria-label="설명선"><svg><use href="#s-call"/></svg></button>
                  <button aria-label="타원 설명선"><svg><use href="#s-ocall"/></svg></button>
                  <button aria-label="구름 설명선"><svg><use href="#s-cloud"/></svg></button>
                </div>
                <div class="gallery-scroll">
                  <button class="turn-left" aria-label="이전"><svg class="caret"><use href="#caret"/></svg></button>
                  <button aria-label="다음"><svg class="caret"><use href="#caret"/></svg></button>
                  <button aria-label="더 보기"><svg class="caret"><use href="#caret"/></svg></button>
                </div>
                <div class="stack">
                  <button><svg><use href="#outline"/></svg>윤곽선<svg class="caret"><use href="#caret"/></svg></button>
                  <button><svg><use href="#bucket"/></svg>채우기<svg class="caret"><use href="#caret"/></svg></button>
                </div>
              </div>
              <div class="group-label">도형</div>
            </div>
            <div class="group weight-group">
              <div class="group-body">
                <button class="big"><svg><use href="#weights"/></svg><span>크기</span><svg class="caret"><use href="#caret"/></svg></button>
              </div>
            </div>
            <div class="group color-group">
              <div class="group-body">
                <button class="big color-one"><i class="swatch"></i><span>색<br>1</span></button>
                <button class="big color-two"><i class="swatch"></i><span>색<br>2</span></button>
                <div class="colors">
                  <button class="black" aria-label="검정"></button>
                  <button class="gray" aria-label="회색"></button>
                  <button class="maroon" aria-label="진한 빨강"></button>
                  <button class="red" aria-label="빨강"></button>
                  <button class="orange" aria-label="주황"></button>
                  <button class="yellow" aria-label="노랑"></button>
                  <button class="green" aria-label="녹색"></button>
                  <button class="sky" aria-label="옥색"></button>
                  <button class="indigo" aria-label="남색"></button>
                  <button class="purple" aria-label="자주"></button>
                  <button class="white" aria-label="흰색"></button>
                  <button class="silver" aria-label="밝은 회색"></button>
                  <button class="brown" aria-label="갈색"></button>
                  <button class="rose" aria-label="장미"></button>
                  <button class="gold" aria-label="황금색"></button>
                  <button class="cream" aria-label="밝은 노랑"></button>
                  <button class="lime" aria-label="라임"></button>
                  <button class="aqua" aria-label="밝은 옥색"></button>
                  <button class="steel" aria-label="청회색"></button>
                  <button class="lavender" aria-label="연보라"></button>
                  <button aria-label="빈 색 1"></button>
                  <button aria-label="빈 색 2"></button>
                  <button aria-label="빈 색 3"></button>
                  <button aria-label="빈 색 4"></button>
                  <button aria-label="빈 색 5"></button>
                  <button aria-label="빈 색 6"></button>
                  <button aria-label="빈 색 7"></button>
                  <button aria-label="빈 색 8"></button>
                  <button aria-label="빈 색 9"></button>
                  <button aria-label="빈 색 10"></button>
                </div>
                <button class="big edit-colors"><svg><use href="#spectrum"/></svg><span>색<br>편집</span></button>
              </div>
              <div class="group-label">색</div>
            </div>
            <div class="group paint3d-group">
              <div class="group-body">
                <button class="big"><svg><use href="#paint3d"/></svg><span>그림판 3<br>D로 편집</span></button>
              </div>
            </div>
          </div>
          <div class="workspace"><div class="sheet"></div></div>
          <div class="status-bar">
            <div class="cell cursor"><svg><use href="#move"/></svg></div>
            <div class="cell"><svg><use href="#dims"/></svg>378 × 47px</div>
            <div class="cell"><svg><use href="#dims"/></svg>1536 × 864px</div>
            <div class="cell"></div>
            <div class="cell rest"></div>
            <div class="zoom-bar">
              <span>100%</span>
              <button aria-label="축소">−</button>
              <input type="range" min="0" max="100" value="50" aria-label="확대/축소">
              <button aria-label="확대">+</button>
              <svg class="grip"><use href="#grip"/></svg>
            </div>
          </div>
        </div>
      </div>

      <div class="taskbar">
        <nav class="apps">
          <button aria-label="시작"><svg><use href="#t-start"/></svg></button>
          <button aria-label="검색"><svg><use href="#t-search"/></svg></button>
          <button aria-label="작업 보기"><svg><use href="#t-view"/></svg></button>
          <button aria-label="메일"><svg><use href="#t-mail"/></svg></button>
          <button class="open" aria-label="파일 탐색기"><svg><use href="#t-explorer"/></svg></button>
          <button class="open" aria-label="Chrome"><svg><use href="#t-chrome"/></svg></button>
          <button><svg><use href="#t-word"/></svg><b class="office">W</b></button>
          <button class="open"><svg><use href="#t-onenote"/></svg><b class="office">N</b></button>
          <button class="open" aria-label="녹화"><svg><use href="#t-disc"/></svg></button>
          <button aria-label="계산기"><svg><use href="#t-calc"/></svg></button>
          <button aria-label="메모"><svg><use href="#t-note"/></svg></button>
          <button aria-label="잠금"><svg><use href="#t-lock"/></svg></button>
          <button><svg><use href="#t-ps"/></svg><b class="adobe">Ps</b></button>
          <button aria-label="도구"><svg><use href="#t-tool"/></svg></button>
          <button aria-label="Edge"><svg><use href="#t-edge"/></svg></button>
          <button class="current" aria-label="그림판"><svg><use href="#palette"/></svg></button>
        </nav>
        <div class="toast"></div>
        <button class="tray" aria-label="숨겨진 아이콘"><svg><use href="#up"/></svg></button>
      </div>
    </section>
  </main>

  <!-- Floating menu -->
  <div class="menu-ring">
    <button class="menu-button" aria-label="메뉴"><span></span><span></span><span></span></button>
  </div>
</body>
</html>
```

FILE: styles.css
```css
* {
  margin: 0;
  padding: 0;
  box-sizing: border-box;
}

body {
  height: 100vh;
  display: grid;
  grid-template-rows: 264fr 714fr 264fr;
  background: #000;
  color: #444;
  font-family: Roboto, "Noto Sans CJK KR", sans-serif;
  font-size: 8px;
  line-height: 10px;
  overflow: hidden;
}

button,
input {
  border: none;
  background: none;
  font: inherit;
  color: inherit;
  outline: none;
}

button {
  display: flex;
  align-items: center;
  justify-content: center;
  white-space: nowrap;
}

svg {
  display: block;
  flex: none;
  width: 8px;
  height: 8px;
}

.sprite {
  position: absolute;
  width: 0;
  height: 0;
}

/* Screens */
.screens {
  grid-row: 2;
  display: grid;
  grid-template-columns: 1097fr 1111fr;
  min-height: 0;
}

.screen {
  position: relative;
  display: flex;
  flex-direction: column;
  overflow: hidden;
  min-width: 0;
}

.desktop {
  flex: 1;
  min-height: 0;
}

.wallpaper {
  position: absolute;
  inset: 0;
  width: 100%;
  height: 100%;
}

/* Windows */
.window {
  position: absolute;
  display: flex;
  flex-direction: column;
  background: #fff;
  box-shadow: 0 1px 6px rgba(0, 20, 60, 0.6);
}

.explorer {
  left: 0;
  top: 125px;
  bottom: 93px;
  width: 363px;
}

.paint {
  left: 8px;
  right: 96px;
  top: 70px;
  bottom: 77px;
}

.title-bar {
  display: flex;
  align-items: center;
  flex: none;
  height: 17px;
}

.window-buttons {
  display: flex;
  margin-left: auto;
  color: #222;
}

.window-buttons button {
  width: 29px;
  height: 17px;
}

.explorer .window-buttons {
  padding-right: 1px;
  color: #888;
}

.paint .window-buttons {
  padding-right: 2px;
}

.tab-bar {
  display: flex;
  align-items: center;
  flex: none;
  height: 17px;
  padding-right: 2px;
}

.collapse {
  margin-left: auto;
  margin-right: 4px;
  color: #999;
}

.help {
  width: 9px;
  height: 9px;
  border-radius: 50%;
  background: #0c6cbd;
  color: #fff;
}

/* Ribbon */
.ribbon {
  display: flex;
  flex: none;
  height: 61px;
  background: #f5f6f7;
  border-top: 1px solid #dcdfe1;
}

.group {
  display: flex;
  flex-direction: column;
  border-right: 1px solid #e3e5e7;
  padding-bottom: 2px;
}

.group-body {
  display: flex;
  align-items: flex-start;
  flex: 1;
}

.group-label {
  text-align: center;
  color: #5c5c5c;
}

.big {
  flex-direction: column;
  justify-content: flex-start;
  width: 29px;
  padding-top: 4px;
  color: #555;
}

.big svg {
  width: 18px;
  height: 18px;
}

.big span {
  margin-top: 2px;
}

.caret,
.big .caret,
.stack .caret {
  width: 4px;
  height: 4px;
}

.big .caret {
  margin-top: 3px;
}

.stack {
  padding-top: 2px;
}

.explorer .stack {
  padding-top: 1px;
}

.stack button {
  height: 13px;
  gap: 3px;
}

.stack.loose button {
  height: 15px;
}

.stack svg {
  width: 9px;
  height: 9px;
}

.dim,
.stack .dim {
  color: #999;
}

.new-group { width: 84px; }
.open-group { width: 76px; }
.pick-group { width: 70px; }
.pick-group .stack { padding-left: 3px; }

/* Explorer address row */
.address-row {
  display: flex;
  flex: none;
  gap: 7px;
  height: 24px;
  padding: 2px 6px 3px 0;
}

.address {
  display: flex;
  width: 169px;
  border: 1px solid #e3e3e3;
  border-left: none;
}

.address input {
  flex: 1;
  min-width: 0;
}

.address button {
  width: 18px;
}

.address .refresh {
  border-left: 1px solid #d5d5d5;
  width: 19px;
}

.search {
  display: flex;
  align-items: center;
  flex: 1;
  gap: 7px;
  padding-left: 7px;
  border: 1px solid #e8e8e8;
  color: #777;
}

.search svg {
  width: 10px;
  height: 10px;
}

.search input {
  flex: 1;
  min-width: 0;
}

.search input::placeholder {
  color: #777;
}

/* Explorer file list */
.file-area {
  display: flex;
  flex: 1;
  min-height: 0;
}

.file-list {
  flex: 1;
  overflow: hidden;
}

table {
  width: 100%;
  height: 369px;
  table-layout: fixed;
  border-collapse: collapse;
  color: #707070;
}

th {
  height: 21px;
  padding: 0 0 2px 3px;
  border-right: 1px solid #ececec;
  text-align: left;
  font-weight: normal;
  color: #68748c;
}

th:last-child {
  border: none;
}

td {
  padding-left: 3px;
  white-space: nowrap;
}

th:first-child,
td:first-child {
  padding-left: 18px;
}

.date { width: 104px; }
.type { width: 75px; }
.size { width: 49px; }

.scrollbar {
  display: flex;
  flex-direction: column;
  width: 10px;
  margin-top: 2px;
  background: #f0f0f0;
  color: #444;
}

.scrollbar button {
  height: 10px;
}

.scrollbar .thumb {
  height: 78px;
  background: #c9c9c9;
}

.scrollbar .last {
  margin-top: auto;
}

.view-bar {
  display: flex;
  justify-content: flex-end;
  flex: none;
  height: 15px;
  padding: 0 2px 1px 0;
}

.view-bar button {
  width: 14px;
  border: 1px solid transparent;
}

.view-bar .active {
  background: #cdebf6;
  border-color: #6fb4cb;
}

/* Paint title and tabs */
.paint .title-bar {
  height: 19px;
  padding-left: 4px;
}

.paint .app-icon {
  width: 12px;
  height: 12px;
}

.bar {
  width: 1px;
  height: 7px;
  margin: 0 3px 0 1px;
  background: #bbb;
}

.paint .title-bar > button {
  width: 13px;
}

.title {
  color: #333;
}

.paint .tab-bar {
  height: 15px;
  padding-left: 1px;
  padding-right: 3px;
}

.tab {
  align-self: stretch;
  width: 33px;
}

.tab.file {
  width: 34px;
  background: #1979ca;
  color: #e8f2fb;
}

.tab.home {
  width: 25px;
  background: #f5f6f7;
  border: 1px solid #e3e5e7;
  border-bottom: none;
}

/* Paint ribbon */
.paint .ribbon {
  height: 62px;
  padding-left: 1px;
}

.clip-group { width: 84px; }
.clip-group .big { width: 38px; }
.image-group { width: 78px; }
.tool-group { width: 48px; }
.brush-group { width: 30px; }
.shape-group { width: 144px; }
.weight-group { width: 31px; }
.color-group { width: 215px; }
.paint3d-group { width: 38px; }
.paint3d-group .big { width: 37px; }

.clip-group .stack button,
.image-group .stack button {
  gap: 2px;
}

.tool-group .group-body {
  display: grid;
  grid-template-columns: repeat(3, 14px);
  grid-template-rows: repeat(2, 19px);
  align-items: center;
  padding: 6px 0 0 2px;
}

.tool-group svg {
  width: 11px;
  height: 11px;
}

.letter {
  font-family: "Liberation Serif", serif;
  font-size: 12px;
  font-weight: bold;
  color: #1d3a66;
}

.brush-group .big {
  padding-top: 3px;
}

.brush-group .big svg {
  width: 20px;
  height: 20px;
}

.brush-group .big span {
  margin-top: 1px;
}

.brush-group .big .caret,
.weight-group .big .caret {
  width: 4px;
  height: 4px;
}

.shape-group .group-body {
  padding: 4px 0 0 3px;
}

.shape-group .stack {
  padding: 0 0 0 1px;
  margin-top: -2px;
}

.gallery {
  display: grid;
  grid-template-columns: repeat(7, 12px);
  grid-auto-rows: 12px;
  background: #fff;
  border: 1px solid #e1e6ec;
  border-right: none;
}

.gallery svg {
  width: 12px;
  height: 12px;
  fill: #f2f8fd;
  stroke: #4f7da6;
}

.gallery .chosen {
  background: #cfe5f8;
  box-shadow: 0 0 0 1px #8fbfe8 inset;
}

.turn-left { transform: rotate(180deg); }
.turn-up { transform: rotate(-90deg); }
.turn-down { transform: rotate(90deg); }

.gallery-scroll {
  display: grid;
  grid-template-rows: repeat(3, 12px);
  width: 9px;
  border: 1px solid #e1e6ec;
}

.weight-group .big svg {
  width: 20px;
}

/* Color palette */
.color-group .group-body {
  padding-left: 2px;
}

.swatch {
  width: 20px;
  height: 20px;
  border: 1px solid #999;
  background: #000;
}

.color-one {
  width: 25px;
  height: 46px;
  margin-top: 2px;
  padding-top: 2px;
  background: #cbe3f7;
}

.color-two {
  width: 24px;
  height: 46px;
  margin-top: 2px;
  padding-top: 4px;
}

.color-two .swatch {
  width: 16px;
  height: 16px;
  margin-bottom: 2px;
  background: #fff;
}

.colors {
  display: grid;
  grid-template-columns: repeat(10, 1fr);
  grid-auto-rows: 12px;
  gap: 1px;
  width: 134px;
  margin-top: 3px;
}

.colors button {
  border: 1px solid #b0b0b0;
  background: #fafafa;
}

.colors .black { background: #000; }
.colors .gray { background: #7f7f7f; }
.colors .maroon { background: #880015; }
.colors .red { background: #ed1c24; }
.colors .orange { background: #ff7f27; }
.colors .yellow { background: #fff200; }
.colors .green { background: #22b14c; }
.colors .sky { background: #00a2e8; }
.colors .indigo { background: #3f48cc; }
.colors .purple { background: #a349a4; }
.colors .white { background: #fff; }
.colors .silver { background: #c3c3c3; }
.colors .brown { background: #b97a57; }
.colors .rose { background: #ffaec9; }
.colors .gold { background: #ffc90e; }
.colors .cream { background: #efe4b0; }
.colors .lime { background: #b5e61d; }
.colors .aqua { background: #99d9ea; }
.colors .steel { background: #7092be; }
.colors .lavender { background: #c8bfe7; }

.edit-colors {
  width: 26px;
}

/* Paint workspace */
.workspace {
  flex: 1;
  padding: 3px 243px 24px 2px;
  background: linear-gradient(#c5cfde, #dde7f4);
}

.sheet {
  height: 100%;
  background: #fff;
  box-shadow: 2px 2px 3px rgba(90, 105, 130, 0.5);
}

.status-bar {
  display: flex;
  flex: none;
  height: 17px;
  background: #f1f1f2;
  border-top: 1px solid #d8dde4;
  color: #333;
}

.cell {
  display: flex;
  align-items: center;
  gap: 3px;
  width: 99px;
  padding-left: 3px;
  border-right: 1px solid #d5d7da;
}

.cell.cursor {
  padding-left: 2px;
}

.cell.cursor svg {
  width: 9px;
  height: 9px;
}

.cell.rest {
  flex: 1;
}

.zoom-bar {
  display: flex;
  align-items: center;
  gap: 4px;
  width: 134px;
  padding-left: 11px;
}

.zoom-bar button {
  flex: none;
  width: 10px;
  height: 10px;
  border: 1px solid #888;
  border-radius: 50%;
  background: #fafafa;
}

.zoom-bar input {
  appearance: none;
  flex: none;
  width: 54px;
  height: 11px;
  margin: 0 2px;
  background: linear-gradient(#d8d8d8, #d8d8d8) center / 100% 2px no-repeat;
}

.zoom-bar input::-webkit-slider-thumb {
  appearance: none;
  width: 6px;
  height: 11px;
  background: #0b7bd6;
  clip-path: polygon(0 0, 100% 0, 100% 75%, 50% 100%, 0 75%);
}

.grip {
  align-self: flex-end;
  margin-left: auto;
}

/* Desktop shortcuts */
.shortcut {
  position: absolute;
  display: flex;
  flex-direction: column;
  align-items: center;
  gap: 2px;
  width: 46px;
  color: #fff;
  text-align: center;
  white-space: nowrap;
  text-shadow: 0 1px 2px #000, 0 0 1px #000;
}

.shortcut svg {
  width: 26px;
  height: 27px;
}

.bin { left: 0; top: 6px; }
.mat { left: 46px; top: 6px; }
.blog { left: 0; top: 640px; }
.chip { left: 46px; top: 640px; }

.chip::before {
  content: "";
  position: absolute;
  top: -12px;
  width: 21px;
  height: 10px;
  background: #101c28;
}

.peek {
  position: absolute;
  top: 65px;
  width: 22px;
  height: 22px;
  border-radius: 50%;
}

.peek.red { left: 13px; background: #e0473c; }
.peek.navy { left: 58px; background: #17294a; }

/* Taskbar */
.taskbar {
  position: relative;
  display: flex;
  align-items: stretch;
  flex: none;
  height: 25px;
  background: linear-gradient(90deg, #22383f, #1f343e 60%, #1a2742);
}

.apps {
  display: grid;
  grid-template-columns: repeat(16, 1fr);
  width: 490px;
}

.apps-cut {
  grid-template-columns: repeat(11, 1fr);
  width: 337px;
  margin-left: -18px;
}

.apps button {
  position: relative;
  border-bottom: 2px solid transparent;
}

.apps svg {
  width: 16px;
  height: 16px;
}

.apps .open {
  margin: 0 3px;
  border-color: #7fb9e6;
}

.apps .current {
  background: #4b6069;
  border-color: #7fb9e6;
}

/* Letters on the app tiles */
.office,
.adobe {
  position: absolute;
  inset: 0;
  display: flex;
  align-items: center;
  justify-content: center;
  font-size: 6px;
  color: #fff;
}

.office {
  padding-right: 6px;
}

.adobe {
  font-size: 8px;
  color: #31c5f0;
}

.clock {
  display: flex;
  flex-direction: column;
  justify-content: space-around;
  align-items: center;
  margin-left: auto;
  padding: 0 4px;
  color: #fff;
}

.tray {
  margin-left: auto;
  width: 20px;
  color: #fff;
}

.toast {
  align-self: flex-end;
  display: flex;
  width: 265px;
  height: 9px;
  margin-left: 84px;
  padding: 4px 8px 0;
  border: 2px solid #3fa044;
  border-bottom: none;
  border-radius: 2px 2px 0 0;
  background: #f1f3f1;
}

.toast::after {
  content: "";
  width: 44px;
  height: 1px;
  margin-left: auto;
  background: #999;
}

/* Floating menu */
.menu-ring {
  position: absolute;
  right: 15px;
  bottom: 5px;
  display: flex;
  align-items: center;
  justify-content: center;
  width: 177px;
  height: 209px;
  padding: 8px 3px 0 0;
  border: 8px solid #ed1c24;
  border-radius: 50%;
}

.menu-button {
  flex: none;
  flex-direction: column;
  gap: 9px;
  width: 120px;
  height: 120px;
  border-radius: 50%;
  background: #1e8cf3;
  cursor: pointer;
}

.menu-button span {
  width: 54px;
  height: 6px;
  background: #fff;
}
```
